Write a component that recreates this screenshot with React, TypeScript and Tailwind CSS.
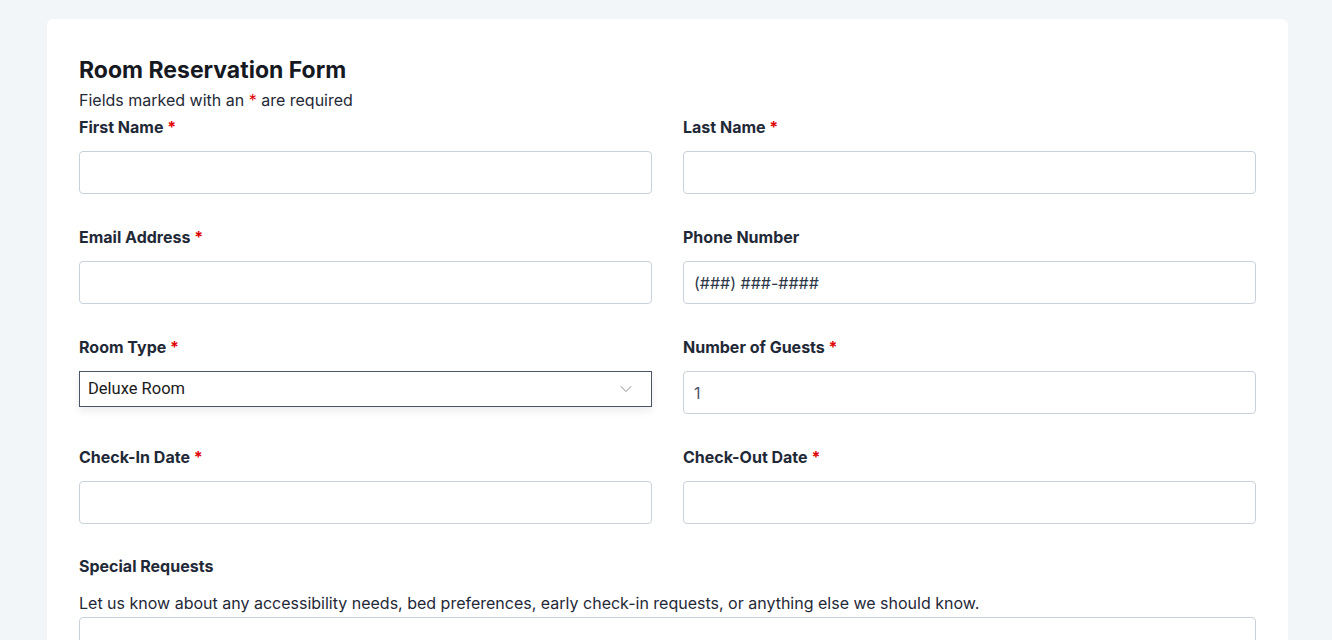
import React from 'react';
import { ChevronDown } from 'lucide-react';

const Req = () => <span className="text-[#e00000]"> *</span>;

const Field = ({ label, required, children }: { label: string; required?: boolean; children: React.ReactNode }) => (
  <div className="flex flex-col">
    <label className="mb-3 text-base font-bold leading-6 text-[#1f2937]">
      {label}
      {required && <Req />}
    </label>
    {children}
  </div>
);

const inputCls =
  'h-[43px] w-full rounded-[4px] border border-[#c9d1db] bg-white px-[10px] text-base text-[#2d3748] outline-none';

const App = () => {
  return (
    <div className="min-h-screen bg-[#f3f6f9] pl-[47px] pr-[44px] pt-[19px] font-['Inter',sans-serif] text-[#1a202c]">
      <div className="rounded-md bg-white px-8 pt-[33px] pb-10">
        <h1 className="text-[23px] font-bold leading-9 text-[#16191f]">Room Reservation Form</h1>
        <p className="text-base leading-6 text-[#1f2937]">
          Fields marked with an <span className="text-[#e00000]">*</span> are required
        </p>
        <div className="mt-[3px] grid grid-cols-2 gap-x-[31px] gap-y-[31px]">
          <Field label="First Name" required>
            <input className={inputCls} />
          </Field>
          <Field label="Last Name" required>
            <input className={inputCls} />
          </Field>
          <Field label="Email Address" required>
            <input className={inputCls} />
          </Field>
          <Field label="Phone Number">
            <input className={inputCls} defaultValue="(###) ###-####" />
          </Field>
          <Field label="Room Type" required>
            <div className="relative h-[36px] w-full border border-[#4a5568] bg-white shadow-[0_4px_8px_rgba(0,0,0,0.08)]">
              <div className="flex h-full items-center px-2 font-['Roboto',sans-serif] text-[16.5px] text-[#1a1a1a]">
                Deluxe Room
              </div>
              <ChevronDown className="absolute right-[15px] top-[7px] h-5 w-5 text-[#a0a4aa]" strokeWidth={1.25} />
            </div>
          </Field>
          <Field label="Number of Guests" required>
            <input className={inputCls + ' text-[#4a5568]'} defaultValue="1" />
          </Field>
          <Field label="Check-In Date" required>
            <input className={inputCls} />
          </Field>
          <Field label="Check-Out Date" required>
            <input className={inputCls} />
          </Field>
        </div>
        <div className="mt-[30px]">
          <label className="block text-base font-bold leading-6 text-[#1f2937]">Special Requests</label>
          <p className="mt-[13px] text-base leading-6 text-[#1f2937]">
            Let us know about any accessibility needs, bed preferences, early check-in requests, or anything else we should know.
          </p>
          <textarea className="mt-[2px] block h-[100px] w-full rounded-[4px] border border-[#c9d1db] outline-none" />
        </div>
      </div>
    </div>
  );
};

export default App;
